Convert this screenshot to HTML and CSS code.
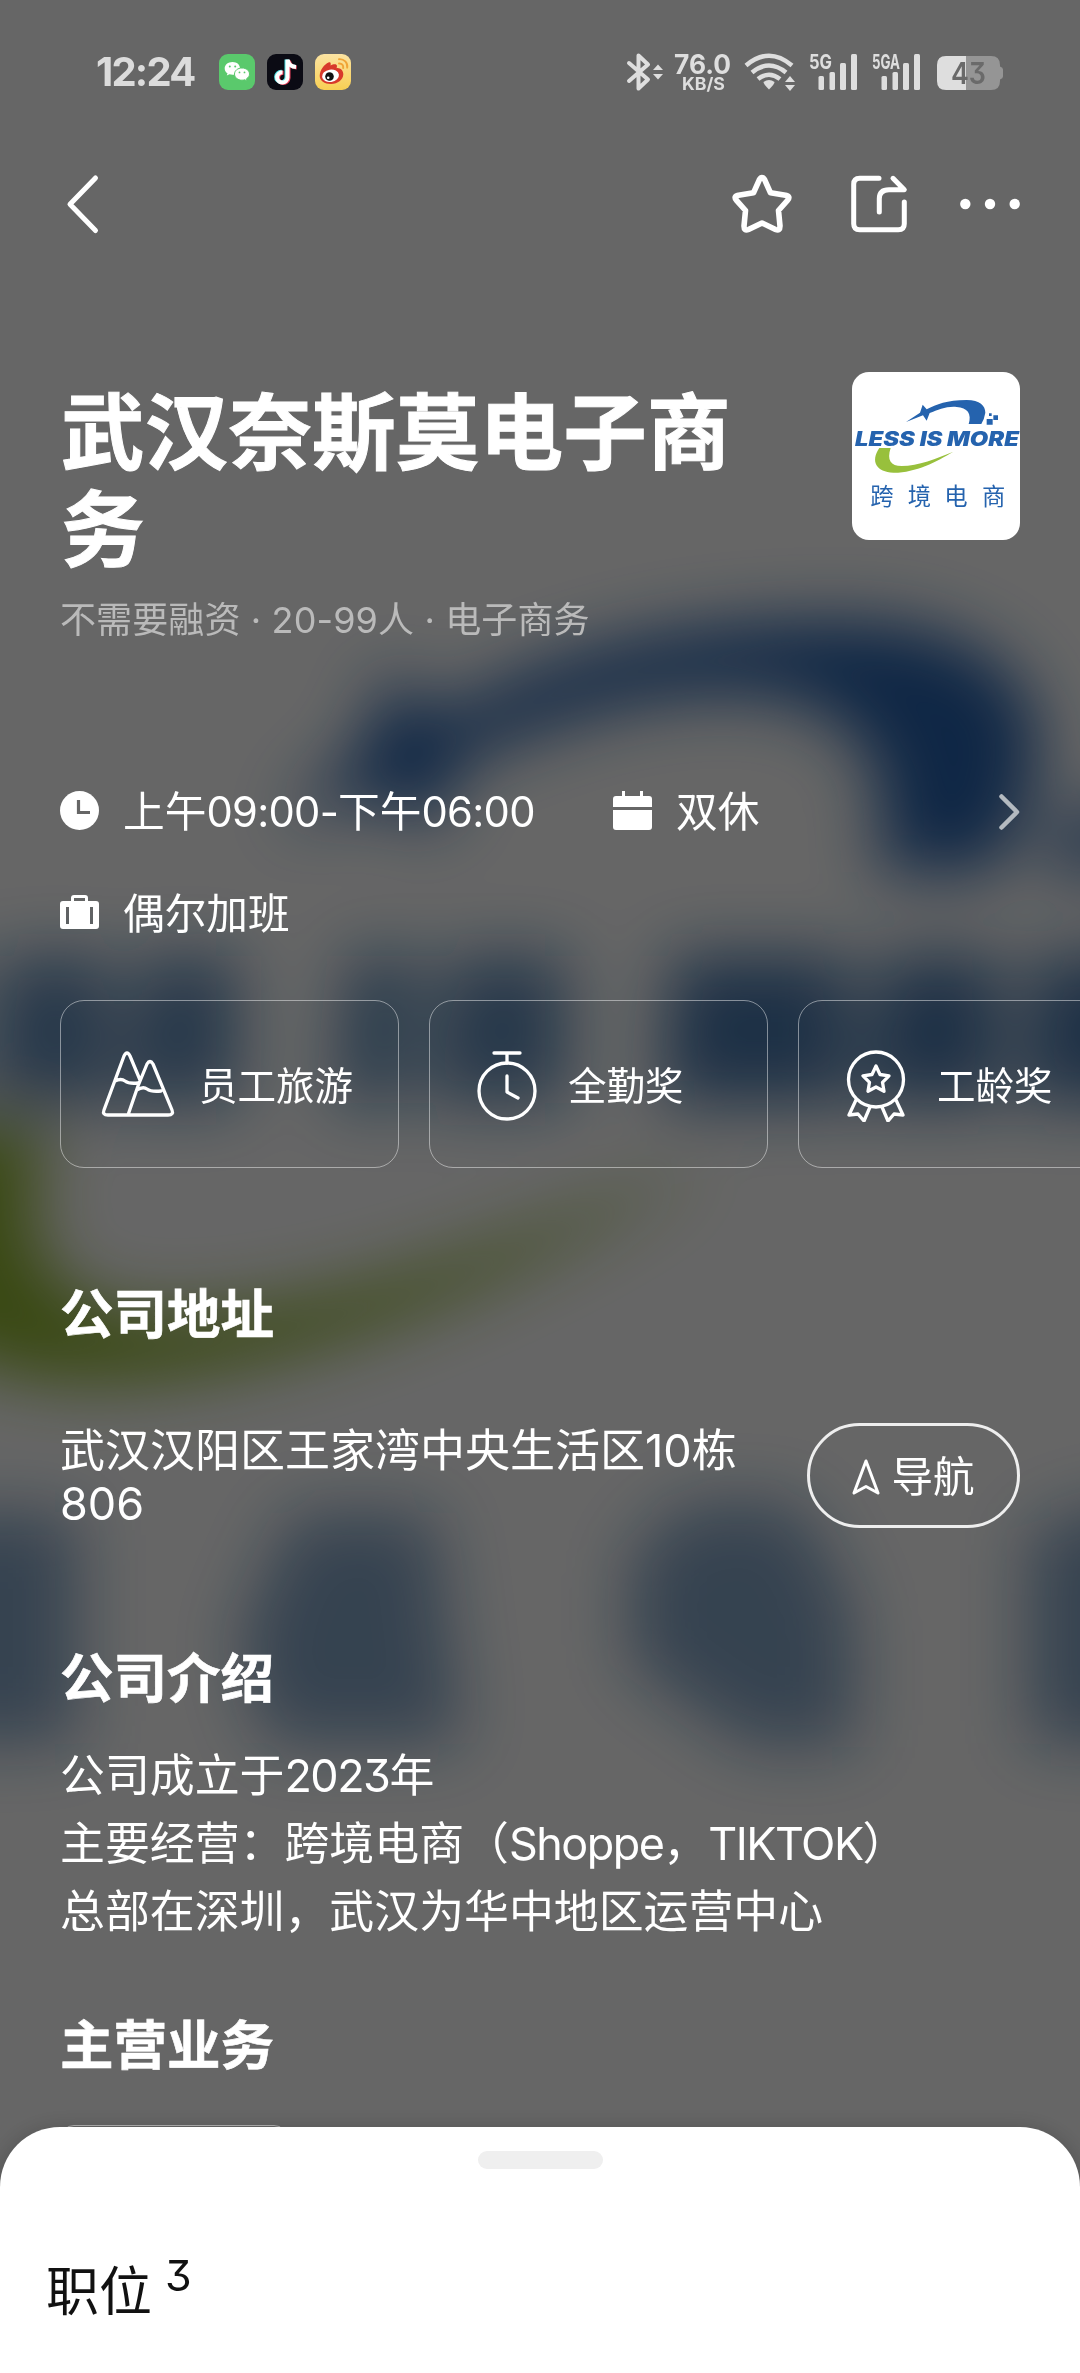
FILE: index.html
```html
<!DOCTYPE html>
<html lang="zh-CN">
<head>
<meta charset="utf-8">
<title>武汉奈斯莫电子商务</title>
<link rel="stylesheet" href="styles.css">
</head>
<body>
<div class="page">
  <svg class="backdrop" viewBox="0 0 1080 2373" aria-hidden="true">
    <defs><filter id="soft" x="-20%" y="-20%" width="140%" height="140%"><feGaussianBlur stdDeviation="9.5"/></filter></defs>
    <g transform="translate(-588 95) scale(3.5)" filter="url(#soft)">
      <g fill="#2762ad">
        <path d="M248 208L272 186L280 164L292 178C320 163 350 150 410 150C450 150 466 170 465 188Q462 207 452 222H418C426 192 412 172 380 171C350 170 325 180 300 190L292 210L276 200Z"/>
        <path d="M470 206h18v16h-18zM490 196h13v13h-13z"/>
      </g>
      <g fill="#1d5c9c">
        <g opacity=".7">
          <path d="M82 246h20v24h14v18H75zM128 246h28v16h-14v10h14v16h-34zM168 246h32v42h-36zM208 246h28v42h-34zM268 246h20l-5 42h-19zM296 246h34v42h-40z"/>
        </g>
        <path opacity=".82" d="M360 246h51v42h-54zM420 246h34v42h-40zM464 246h40v42h-44zM522 246h44v42h-48z"/>
        <g opacity=".54">
          <path d="M124 405h66v66h-66zM252 405h40l8 66h-56l-8-30zM364 402h32l16 30v40h-30l-34-24v-30zM462 410l26-8 36 8v61h-62z"/>
        </g>
      </g>
      <path fill="#8fb52f" d="M148 294H182C170 330 182 348 215 348C265 348 320 325 370 305C320 335 255 369 190 368C140 366 120 335 148 294Z"/>
    </g>
    <rect width="1080" height="2373" fill="#000" opacity=".6"/>
  </svg>

  <header class="status">
    <div class="status-left">
      <span class="clock">12:24</span>
      <svg class="app" viewBox="0 0 36 36"><rect width="36" height="36" rx="9" fill="#5ac96c"/><path fill="#fff" d="M13.5 8C9 8 5.700 10.800 5.700 14.400c0 2 1 3.700 2.800 4.900l-.7 2.300 2.700-1.300c1 .3 2 .4 3 .4C18 20.700 21 18 21 14.400S18 8 13.500 8z"/><path fill="#fff" stroke="#5ac96c" d="M23 14c-4.300 0-7.500 2.700-7.500 6s3.200 6.200 7.500 6.200c1 0 1.900-.2 2.700-.5l2.400 1.400-.6-2.300c1.900-1.200 3-2.900 3-4.800 0-3.300-3.200-6-7.500-6z"/><g fill="#5ac96c"><circle cx="10.800" cy="12.600" r="1"/><circle cx="16.200" cy="12.600" r="1"/><circle cx="20.500" cy="18.400" r=".9"/><circle cx="25.500" cy="18.400" r=".9"/></g></svg>
      <svg class="app" viewBox="0 0 36 36"><rect width="36" height="36" rx="9" fill="#0b0b14"/><g fill="none" stroke-width="4"><path stroke="#4fe3e6" d="M19.500 5.500V23a5.200 5.200 0 1 1-5-5.300M20 6c.6 4 3.800 6.500 8 6.800"/><path stroke="#f2435f" d="M21.500 6.500V24a5.200 5.200 0 1 1-5-5.300M22 7c.6 4 3.500 6.200 7.700 6.500"/><path stroke="#fff" d="M20.500 5.500V23.500a5.200 5.200 0 1 1-5-5.300M20.800 6c.6 4.200 3.800 6.700 8.200 7"/></g></svg>
      <svg class="app" viewBox="0 0 36 36"><defs><linearGradient id="wb" x1="0" y1="0" x2="0" y2="1"><stop offset="0" stop-color="#fbe3a2"/><stop offset="1" stop-color="#f8cf53"/></linearGradient></defs><rect width="36" height="36" rx="9" fill="url(#wb)"/><path fill="#d8392b" d="M13.500 8.500c2.500-1 2.500 1.500 2 3 2.500-1.300 6.500-2 6.500.5 0 1-.3 1.600-.5 2.200 3.500-.7 7 2.300 6.800 6.300-.3 5.500-5.600 9.200-12 9.500C10 30.200 4.500 27 4.700 21.500 5 16 9.500 10 13.500 8.500z"/><ellipse cx="15.500" cy="21.800" rx="8.500" ry="6.200" fill="#fff" transform="rotate(-8 15.500 21.800)"/><circle cx="14.500" cy="22.500" r="4.300" fill="#111"/><circle cx="13.200" cy="23.800" r="1.300" fill="#fff"/><g fill="none" stroke="#f0a437" stroke-width="1.900" stroke-linecap="round"><path d="M24 5.200c5-.5 9 3.600 8.200 8.500"/><path d="M24 9.500c3-.2 4.500 2 4.200 4.500"/></g></svg>
    </div>
    <svg class="status-right" viewBox="620 50 390 44">
      <g fill="none" stroke="#dedede" stroke-width="4" stroke-linejoin="round" stroke-linecap="round">
        <path d="M629 63L648 79.500L638.500 88.500V55.500L648 64.500L629 81"/>
      </g>
      <g fill="#dedede">
        <path d="M653 70h10l-5-5.500zM653 74h10l-5 5.500z"/>
        <text class="net" x="674" y="73.500" textLength="57" lengthAdjust="spacingAndGlyphs" font-size="27">76.0</text>
        <text class="net" x="682" y="89.500" textLength="43" lengthAdjust="spacingAndGlyphs" font-size="17">KB/S</text>
        <path d="M763.500 82q5.500-4 11 0 0 2-5.500 7.500-5.500-5.500-5.500-7.500z"/>
        <path d="M785 82h10l-5-6zM785 85h10l-5 6z"/>
        <text class="net" x="809" y="69" textLength="23" lengthAdjust="spacingAndGlyphs" font-size="20.500">5G</text>
        <text class="net" x="872" y="69" textLength="28" lengthAdjust="spacingAndGlyphs" font-size="20.500">5GA</text>
        <rect x="818.500" y="76" width="5.500" height="14" rx="1.500"/><rect x="829.500" y="72" width="5.500" height="18" rx="1.500"/><rect x="840" y="63" width="6" height="27" rx="1.500"/><rect x="851" y="54" width="6" height="36" rx="1.500"/>
        <rect x="881.500" y="76" width="5.500" height="14" rx="1.500"/><rect x="892.500" y="72" width="5.500" height="18" rx="1.500"/><rect x="903" y="63" width="6" height="27" rx="1.500"/><rect x="914" y="54" width="6" height="36" rx="1.500"/>
      </g>
      <g fill="none" stroke="#dedede" stroke-width="4.500"><path d="M746 65.500q23-19.500 46 0M752 72.500q17-14 34 0M758 79q11-8.500 22 0"/></g>
      <path fill="#959595" d="M966 56h25q9 0 9 9v1.500q3 1 3 3v7q0 2-3 3V81q0 9-9 9h-25z"/>
      <path fill="#dedede" d="M966 56h-20q-9 0-9 9v16q0 9 9 9h20z"/>
      <text class="net batt" x="951" y="84" textLength="35" lengthAdjust="spacingAndGlyphs" font-size="30">43</text>
    </svg>
  </header>

  <nav class="toolbar">
    <svg class="tool" viewBox="0 0 64 64"><path d="M35.500 6L10 32.300L35.500 58.500"/></svg>
    <div class="tool-group">
      <svg class="tool" viewBox="0 0 64 64"><path class="bold" d="M29.300 7.800Q32 3.500 34.700 7.800L40.500 20.800L55.500 23.300Q61 24.500 57.500 28.300L48.500 38.500L50 54Q50 59.500 45.500 57.500L32 51L18.500 57.500Q14 59.500 14 54L15.500 38.500L6.500 28.300Q3 24.500 8.500 23.300L23.500 20.800Z"/></svg>
      <svg class="tool" viewBox="0 0 64 64"><path d="M32 6.300H12.700q-6 0-6 6v39.400q0 6 6 6h38.600q6 0 6-6V30M46 6.300L57.300 17.800H42q-9.700 0-9.700 9V40"/></svg>
      <svg class="tool" viewBox="0 0 64 64"><g class="dots"><circle cx="7.300" cy="32" r="5.200"/><circle cx="32" cy="32" r="5.200"/><circle cx="56.700" cy="32" r="5.200"/></g></svg>
    </div>
  </nav>

  <main class="content">
    <section class="company">
      <div class="company-text">
        <h1>武汉奈斯莫电子商务</h1>
        <p class="meta">不需要融资 · 20-99人 · 电子商务</p>
      </div>
      <svg class="logo" viewBox="66 66 504 504">
        <g fill="#2563ae">
          <path d="M228 216L270 188L278 164L290 178C320 163 350 150 410 150C450 150 466 168 466 188Q463 207 454 222H416C426 192 412 172 380 171C350 168 325 180 299 189L290 212L279 196Z"/>
          <path d="M470 207h18v17h-18zM490 196h14v14h-14zM477 190h8v8h-8z"/>
          <text class="logo-en" x="75" y="288" textLength="492" lengthAdjust="spacingAndGlyphs">LESS IS MORE</text>
          <text class="logo-cn" x="121 233 343 456" y="464">跨境电商</text>
        </g>
        <path fill="#98c03c" d="M148 294H182C170 330 182 348 215 348C265 348 320 325 370 305C320 335 255 369 190 368C140 366 120 335 148 294Z"/>
      </svg>
    </section>

    <section class="hours">
      <div class="hours-row">
        <svg class="ico" viewBox="0 0 39 39"><circle cx="19.500" cy="19.500" r="19.500" fill="#fff"/><path d="M18.500 9v12.500H30" fill="none" stroke="#666" stroke-width="3.200"/></svg>
        <span class="time">上午<span class="num">09:00-</span>下午<span class="num">06:00</span></span>
        <svg class="ico" viewBox="0 0 39 39"><path fill="#fff" d="M9 0h3v5h15V0h3v5h6q3 0 3 3v8H0V8q0-3 3-3h6zM0 19h39v17q0 3-3 3H3q-3 0-3-3z"/></svg>
        <span>双休</span>
        <svg class="more" viewBox="0 0 21 36"><path d="M2.500 2.500L18 18L2.500 33.500"/></svg>
      </div>
      <div class="hours-row">
        <svg class="ico" viewBox="0 0 39 39"><path fill="#fff" fill-rule="evenodd" d="M11 8V5q0-3 3-3h11q3 0 3 3v3h8q3 0 3 3v22q0 3-3 3H3q-3 0-3-3V11q0-3 3-3zm3 0h11V5H14zM6 14v17h3V14zM30 14v17h3V14z"/></svg>
        <span>偶尔加班</span>
      </div>
    </section>

    <section class="perks">
      <div class="perk"><svg viewBox="0 0 78 78"><path d="M5 66L25 12q3-6 6 0L41 36M5 66q-2 5 4 5h60q6 0 4-5L54 20q-3-5-6 0L39 42L29 71M16 37q6-3 10 0t13 2M38 46q6-4 10-1t14 2"/></svg><span>员工旅游</span></div>
      <div class="perk"><svg viewBox="0 0 78 78"><circle cx="39" cy="47" r="28"/><path d="M26 9h26M39 9v10M39 32v16l11 6"/></svg><span>全勤奖</span></div>
      <div class="perk"><svg viewBox="0 0 78 78"><circle cx="39" cy="35.500" r="27.500"/><path d="M39 22l4 8.500 9 1.300-6.500 6.500 1.500 9-8-4.300-8 4.300 1.500-9-6.500-6.500 9-1.300zM19 56l-7 15 9-1 6 7 6-14M59 56l7 15-9-1-6 7-6-14"/></svg><span>工龄奖</span></div>
    </section>

    <h2>公司地址</h2>
    <section class="address">
      <p>武汉汉阳区王家湾中央生活区10栋<br>806</p>
      <a class="navigate"><svg viewBox="0 0 28 36"><path d="M14 2L26 34L14 27.500L2 34Z"/></svg>导航</a>
    </section>

    <h2 class="intro-title">公司介绍</h2>
    <p class="intro">公司成立于<span class="latin">2023</span>年<br>主要经营：跨境电商（<span class="latin">Shoppe</span>，<span class="latin">TIKTOK</span>）<br>总部在深圳，武汉为华中地区运营中心</p>

    <h2 class="business-title">主营业务</h2>
    <div class="chip"></div>
  </main>

  <aside class="sheet">
    <div class="handle"></div>
    <div class="jobs"><span>职位</span><span class="count">3</span></div>
  </aside>
</div>
</body>
</html>
```
FILE: styles.css
```css
* { box-sizing: border-box; margin: 0; padding: 0; }
body {
  width: 1080px;
  font-family: Inter, "Noto Sans CJK SC", sans-serif;
  font-feature-settings: "cv09";
  color: #fff;
  background: #666;
}
.page { position: relative; height: 2373px; overflow: hidden; background: #fff; }
.backdrop { position: absolute; inset: 0; width: 1080px; height: 2373px; }

.status {
  position: relative;
  display: flex;
  justify-content: space-between;
  align-items: center;
  height: 144px;
  padding: 0 70px 0 96px;
}
.status-left { display: flex; align-items: center; gap: 12px; }
.clock { width: 111px; font-size: 40px; font-weight: 700; line-height: 44px; letter-spacing: -1.8px; color: #dcdcdc; white-space: nowrap; }
.app { width: 36px; height: 36px; }
.status-right { width: 390px; height: 44px; overflow: visible; }
.net { font-weight: 700; }
.batt { fill: #6a6a6a; font-weight: 600; }

.toolbar {
  position: relative;
  display: flex;
  justify-content: space-between;
  height: 120px;
  padding: 28px 58px 0 60px;
}
.tool-group { display: flex; gap: 53px; }
.tool { width: 64px; height: 64px; fill: none; stroke: #fff; stroke-width: 5; stroke-linecap: round; stroke-linejoin: round; }
.tool:last-child { margin-left: -6px; }
.tool .bold { stroke-width: 5.600; }
.tool .dots { fill: #fff; stroke: none; }

.content { position: relative; padding: 108px 0 0 60px; }
.company { display: flex; justify-content: space-between; height: 410px; padding-right: 60px; }
.company-text { width: 690px; padding-top: 12px; }
h1 { padding-left: 1px; font-size: 83.500px; line-height: 97px; font-weight: 700; letter-spacing: .2px; -webkit-text-stroke: 1px #fff; }
.meta { margin-top: 17px; font-size: 36px; line-height: 50px; letter-spacing: .12px; color: #bababa; white-space: nowrap; }
.logo { width: 168px; height: 168px; border-radius: 17px; background: #fff; }
.logo-en { font-size: 59px; font-weight: 900; font-style: italic; }
.logo-cn { font-size: 70px; }

.hours { display: grid; gap: 42px; padding-right: 60px; }
.hours-row { display: flex; align-items: center; height: 60px; font-size: 41.700px; line-height: 60px; }
.ico { width: 39px; height: 39px; margin: -3px 24px 0 0; }
.time { width: 490px; white-space: nowrap; }
.num { letter-spacing: -.7px; }
.more { width: 21px; height: 36px; margin-left: auto; fill: none; stroke: #b4bac0; stroke-width: 4.500; stroke-linecap: round; stroke-linejoin: round; }

.perks { display: flex; gap: 30px; margin-top: 56px; overflow: hidden; }
.perk {
  flex: none;
  display: flex;
  align-items: center;
  gap: 22px;
  width: 339px;
  height: 168px;
  padding: 0 0 3px 38px;
  border: 1px solid rgba(255, 255, 255, .45);
  border-radius: 24px;
  font-size: 38.500px;
}
.perk svg { width: 78px; height: 78px; fill: none; stroke: #fff; stroke-width: 3.300; stroke-linecap: round; stroke-linejoin: round; }

h2 { margin-top: 112px; font-size: 53.500px; line-height: 70px; font-weight: 700; -webkit-text-stroke: .6px #fff; }
.address { display: flex; justify-content: space-between; margin-top: 73px; padding-right: 60px; font-size: 45px; line-height: 53px; }
.address p { padding-top: 1px; }
.navigate {
  display: flex;
  align-items: center;
  justify-content: center;
  gap: 11px;
  width: 213px;
  height: 105px;
  padding-top: 3px;
  border: 3px solid #eee;
  border-radius: 53px;
  font-size: 41.500px;
}
.navigate svg { width: 28px; height: 36px; fill: none; stroke: #fff; stroke-width: 3; stroke-linejoin: round; }
.intro-title { margin-top: 114px; }
.intro { margin-top: 28px; font-size: 44.900px; line-height: 68px; white-space: nowrap; }
.latin { letter-spacing: -1.500px; }
.business-title { margin-top: 65px; }
.chip { width: 228px; height: 80px; margin-top: 44px; border: 1px solid rgba(255, 255, 255, .5); border-radius: 14px; }

.sheet {
  position: absolute;
  left: 0;
  right: 0;
  bottom: 0;
  height: 246px;
  padding: 24px 46px 0;
  border-radius: 60px 60px 0 0;
  background: #fff;
  box-shadow: 0 4px 26px rgba(0, 0, 0, .24);
  color: #111;
}
.handle { width: 125px; height: 18px; margin: 0 auto; border-radius: 9px; background: #efefef; }
.jobs { display: flex; gap: 13px; margin-top: 88px; font-size: 53px; line-height: 70px; }
.count { font-size: 43px; line-height: 37px; }
```
